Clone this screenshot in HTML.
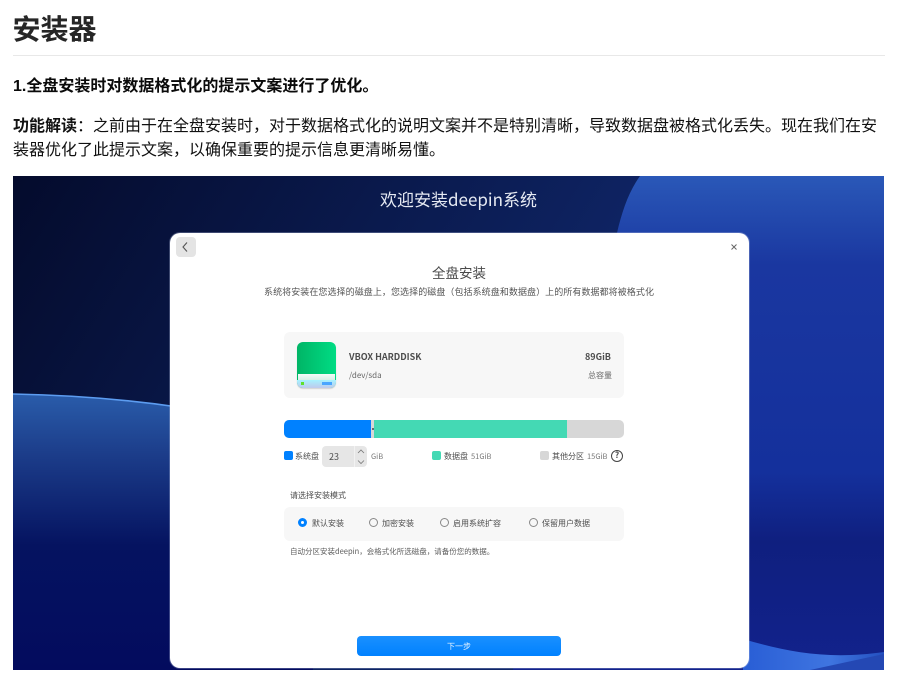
<!DOCTYPE html>
<html lang="zh">
<head>
<meta charset="utf-8">
<style>
html,body{margin:0;padding:0;background:#fff;}
body{width:904px;height:680px;overflow:hidden;position:relative;font-family:"Noto Sans CJK SC","Liberation Sans",sans-serif;color:#222;}
.t{position:absolute;white-space:nowrap;line-height:1;}
.a{position:absolute;}
.s{color:#4d4d4d;font-size:8px;}
.radio{position:absolute;width:7px;height:7px;border:1px solid #888;border-radius:50%;top:518px;box-sizing:content-box;}
</style>
</head>
<body>
<div class="t" style="left:12.5px;top:12px;font-size:28px;font-weight:700;line-height:32px;color:#262626;">安装器</div>
<div class="a" style="left:13px;top:55px;width:872px;height:1px;background:#e8e8e8;"></div>
<div class="t" style="left:13px;top:74px;font-size:16px;font-weight:700;line-height:20px;color:#0a0a0a;"><span style="font-family:'Liberation Sans',sans-serif">1.</span>全盘安装时对数据格式化的提示文案进行了优化。</div>
<div class="t" style="left:13px;top:112px;font-size:16px;line-height:24px;color:#111;"><b style="font-weight:700">功能解读</b>：之前由于在全盘安装时，对于数据格式化的说明文案并不是特别清晰，导致数据盘被格式化丢失。现在我们在安<br>装器优化了此提示文案，以确保重要的提示信息更清晰易懂。</div>

<svg class="a" style="left:13px;top:176px;" width="871" height="494" viewBox="0 0 871 494">
<defs>
<linearGradient id="bg" x1="0" y1="0" x2="1" y2="0.35"><stop offset="0" stop-color="#040b2c"/><stop offset=".65" stop-color="#0e2362"/><stop offset="1" stop-color="#102a70"/></linearGradient>
<linearGradient id="pl" x1="0" y1="217" x2="0" y2="494" gradientUnits="userSpaceOnUse"><stop offset="0" stop-color="#2a5dab"/><stop offset=".22" stop-color="#1c3d8a"/><stop offset=".55" stop-color="#051360"/><stop offset="1" stop-color="#030b5e"/></linearGradient>
<linearGradient id="rt" x1="0" y1="0" x2="0" y2="494" gradientUnits="userSpaceOnUse"><stop offset="0" stop-color="#2a58b8"/><stop offset=".18" stop-color="#1a37a0"/><stop offset=".6" stop-color="#14309c"/><stop offset=".74" stop-color="#0f1f7f"/><stop offset="1" stop-color="#12228c"/></linearGradient>
<linearGradient id="br" x1="736" y1="0" x2="871" y2="0" gradientUnits="userSpaceOnUse"><stop offset="0" stop-color="#2a5fd6"/><stop offset=".6" stop-color="#3f75e0"/><stop offset="1" stop-color="#2450c0"/></linearGradient>
</defs>
<rect width="871" height="494" fill="url(#bg)"/>
<path d="M627 0C616 15 609 35 604 57L560 200L500 494H871V0Z" fill="url(#rt)"/>
<path d="M0 218C55 219 110 223 165 231L300 260V494H0Z" fill="url(#pl)"/>
<path d="M0 218C55 219 110 223 165 231" fill="none" stroke="#5c9cf0" stroke-width="1.6"/>
<path d="M730 463C775 476 815 484 871 476V494H730Z" fill="url(#br)"/>
<path d="M797 494L871 478V494Z" fill="#2448b4"/>
</svg>

<div class="t" style="left:380px;top:187px;font-size:17px;line-height:24px;color:#e6eaf3;">欢迎安装deepin系统</div>

<div class="a" style="left:170px;top:233px;width:579px;height:435px;background:#fff;border-radius:10px;box-shadow:0 0 0 1px rgba(190,200,230,.3);"></div>

<div style="position:absolute;left:0;top:0;width:904px;height:680px;filter:blur(.3px);">
<div class="a" style="left:175.500px;top:237px;width:20px;height:20px;background:#e4e4e4;border-radius:4px;"></div>
<svg class="a" style="left:175px;top:237px;" width="20" height="20"><path d="M12 5.500L8 10L12 14.500" fill="none" stroke="#555" stroke-width="1.100"/></svg>
<svg class="a" style="left:729px;top:242px;" width="10" height="10"><path d="M2.500 2.500L7.500 7.500M7.500 2.500L2.500 7.500" fill="none" stroke="#666" stroke-width="1"/></svg>
<div class="t" style="left:432px;top:264px;font-size:13.500px;line-height:16px;color:#4a4a4a;">全盘安装</div>
<div class="t" style="left:264px;top:286px;font-size:9px;line-height:12px;letter-spacing:.07px;color:#555;">系统将安装在您选择的磁盘上，您选择的磁盘（包括系统盘和数据盘）上的所有数据都将被格式化</div>

<div class="a" style="left:284px;top:332px;width:340px;height:66px;background:#f7f7f7;border-radius:6px;"></div>
<div class="a" style="left:297px;top:342px;width:39px;height:46px;border-radius:6px;background:linear-gradient(90deg,#00b566,#00dc84);box-shadow:0 1px 1px rgba(0,0,0,.15);overflow:hidden;">
  <div class="a" style="left:1px;top:32px;width:37px;height:6px;background:linear-gradient(#f4fbf8,#d5f0e8);"></div>
  <div class="a" style="left:0;top:38px;width:39px;height:8px;background:linear-gradient(#a6f2ff,#bfc9ec);"></div>
  <div class="a" style="left:4px;top:40px;width:3px;height:3px;background:#5fe02c;"></div>
  <div class="a" style="left:25px;top:40px;width:10px;height:3px;background:#4aa6ff;"></div>
</div>
<div class="t" style="left:349px;top:351px;font-size:9px;font-weight:700;line-height:12px;color:#4d4d4d;">VBOX HARDDISK</div>
<div class="t" style="left:349px;top:370px;font-size:8px;line-height:11px;color:#666;">/dev/sda</div>
<div class="t" style="left:585px;top:351px;font-size:9px;font-weight:700;line-height:12px;color:#4d4d4d;">89GiB</div>
<div class="t" style="left:588px;top:370px;font-size:8px;line-height:11px;color:#666;">总容量</div>

<div class="a" style="left:284px;top:420px;width:340px;height:18px;background:#d7d7d7;border-radius:5px;"></div>
<div class="a" style="left:284px;top:420px;width:87px;height:18px;background:#0081ff;border-radius:5px 0 0 5px;"></div>
<div class="a" style="left:374px;top:420px;width:193px;height:18px;background:#44d9b4;"></div>
<div class="a" style="left:371.500px;top:428px;width:2px;height:2px;background:#667;"></div>

<div class="a" style="left:284px;top:451px;width:9px;height:9px;background:#0081ff;border-radius:2px;"></div>
<div class="t s" style="left:295px;top:451px;line-height:11px;">系统盘</div>
<div class="a" style="left:322px;top:446px;width:45px;height:21px;background:#e6e6e6;border-radius:4px;"></div>
<div class="a" style="left:354px;top:446px;width:1px;height:21px;background:#f2f2f2;"></div>
<div class="t s" style="left:329px;top:451px;font-size:9px;line-height:11px;">23</div>
<svg class="a" style="left:355px;top:446px;" width="12" height="21"><path d="M3 7L6 4L9 7M3 14.500L6 17.500L9 14.500" fill="none" stroke="#777" stroke-width=".8"/></svg>
<div class="t" style="left:371px;top:452px;font-size:7.500px;line-height:10px;color:#777;">GiB</div>

<div class="a" style="left:432px;top:451px;width:9px;height:9px;background:#44d9b4;border-radius:2px;"></div>
<div class="t s" style="left:444px;top:451px;line-height:11px;">数据盘</div>
<div class="t" style="left:471px;top:452px;font-size:7.500px;line-height:10px;color:#777;">51GiB</div>

<div class="a" style="left:540px;top:451px;width:9px;height:9px;background:#d7d7d7;border-radius:2px;"></div>
<div class="t s" style="left:552px;top:451px;line-height:11px;">其他分区</div>
<div class="t" style="left:587px;top:452px;font-size:7.500px;line-height:10px;color:#777;">15GiB</div>
<div class="a" style="left:611px;top:450px;width:10px;height:10px;border:1px solid #444;border-radius:50%;"></div>
<div class="t" style="left:611px;top:451px;width:12px;text-align:center;font-size:8px;line-height:10px;font-weight:700;color:#444;">?</div>

<div class="t s" style="left:290px;top:490px;line-height:12px;">请选择安装模式</div>
<div class="a" style="left:284px;top:507px;width:340px;height:34px;background:#f7f7f7;border-radius:6px;"></div>
<div class="a" style="left:298px;top:518px;width:3px;height:3px;border:3px solid #0081ff;border-radius:50%;background:#fff;"></div>
<div class="t s" style="left:312px;top:518px;line-height:12px;">默认安装</div>
<div class="radio" style="left:369px;"></div>
<div class="t s" style="left:382px;top:518px;line-height:12px;">加密安装</div>
<div class="radio" style="left:440px;"></div>
<div class="t s" style="left:453px;top:518px;line-height:12px;">启用系统扩容</div>
<div class="radio" style="left:529px;"></div>
<div class="t s" style="left:542px;top:518px;line-height:12px;">保留用户数据</div>
<div class="t" style="left:290px;top:546px;font-size:7.500px;line-height:12px;color:#5c5c5c;">自动分区安装deepin，会格式化所选磁盘，请备份您的数据。</div>

<div class="a" style="left:357px;top:636px;width:204px;height:20px;background:linear-gradient(#1a90ff,#0081ff);border-radius:4px;"></div>
<div class="t" style="left:357px;top:641px;width:204px;text-align:center;font-size:8px;line-height:11px;color:#e8f4ff;">下一步</div>
</div>
</body>
</html>
